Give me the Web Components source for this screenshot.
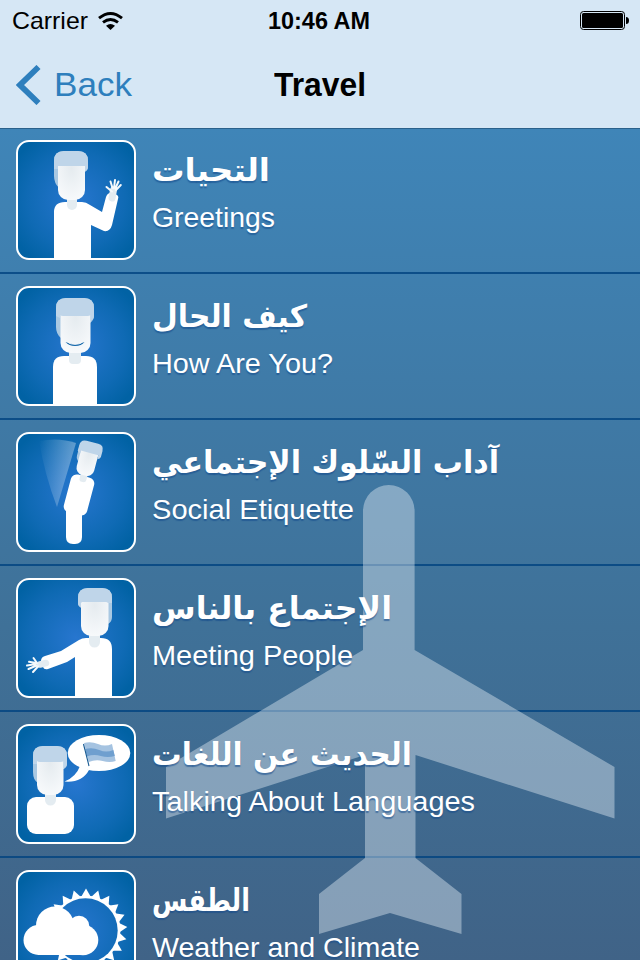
<!DOCTYPE html>
<html lang="en"><head><meta charset="utf-8"><title>Travel</title>
<style>html,body{margin:0;padding:0;width:640px;height:960px;overflow:hidden}</style></head>
<body><travel-app></travel-app>
<script>
class FitText extends HTMLElement{
  connectedCallback(){
    const r=this.attachShadow({mode:'open'});
    r.innerHTML='<style>:host{display:block;white-space:nowrap}span{display:inline-block;transform-origin:0 50%}</style><span><slot></slot></span>';
    const s=r.querySelector('span'),w=+this.getAttribute('width');
    if(w&&s.offsetWidth)s.style.transform='scaleX('+w/s.getBoundingClientRect().width+')';
    if(w)this.style.width=w+'px';
  }
}
customElements.define('fit-text',FitText);

const teeth=()=>{let s='';for(let i=0;i<21;i++){s+=`<path d="M64.800 27.500L70 18.600l5.200 8.900z" transform="rotate(${i*17.14} 70 60)"/>`}return s};
const ART={
greet:`<path fill="#a9c8e2" d="M38 21q0-10 10-10h14q10 0 10 10v6q0 3-3 5H43v16q-5-5-5-12z"/>
<path fill="#fff" d="M38 120V72q0-10 11-10h17q4 0 8 3l12 7 4-15q2-5 7-4l4 2q2 1 1 4l-6 26q-2 7-8 6l-13-6v35z"/><path fill="#e4ecf1" d="M51 58h10v7a5 5 0 0 1-10 0z"/>
<rect x="42" y="15" width="27" height="45" rx="10" fill="url(#face)"/><path fill="#bfd5e9" d="M38 29v-8q0-10 10-10h14q10 0 10 10v6q0 3-3 4v-5H42v3z"/>
<path d="M96 58l1.500-8" stroke="#e4ecf1" stroke-width="7" stroke-linecap="round"/><g stroke="#f5f9fb" stroke-width="2" stroke-linecap="round"><path d="M96 51.500l-5.500-4.500M96.500 48l-2-6.500M98 48l1-8M99.500 48l3-6.500M100 50l4.800-5"/></g>`,
how:`<path fill="#a9c8e2" d="M40 22q0-10 10-10h18q10 0 10 10v8q0 4-4 7H45v15q-5-4-5-11z"/>
<path fill="#fff" d="M37 120V81q0-11 11-11h22q11 0 11 11v39z"/><path fill="#e4ecf1" d="M53 65h12v9q0 4-4 4h-4q-4 0-4-4z"/>
<rect x="44.500" y="16" width="30" height="51" rx="10" fill="url(#face)"/><path fill="#bfd5e9" d="M40 30v-8q0-10 10-10h18q10 0 10 10v8q0 3-3.500 5v-6q-1 1-3 1H47q-2 0-3-1v3z"/><path fill="#1266a9" d="M49.500 56q10 4.500 19 0-3 4-9.500 4-6 0-9.500-4z"/><path fill="#fff" d="M52 56.500q7 3 14 0-2 2.200-7 2.200t-7-2.200z"/>`,
social:`<path fill="url(#beam)" d="M23 9q20-4 37 2L41 75Q29 44 23 9z"/><path fill="#fff" d="M50 70h16v35q0 7-7 7h-2q-7 0-7-7z"/>
<rect x="51" y="43.500" width="24" height="39" rx="6" fill="#fff" transform="rotate(15 63 63)"/><rect x="64" y="40" width="7" height="10" rx="3" fill="#e4ecf1" transform="rotate(15 67 45)"/>
<g transform="rotate(15 73 27)"><rect x="60.500" y="11" width="16" height="22" rx="6" fill="#a9c8e2"/><rect x="63" y="13" width="18" height="31" rx="7" fill="url(#face)"/><path fill="#bfd5e9" d="M60 22v-6q0-6 6-6h12q6 0 6 6v6q0 2-3 3v-4H63v3z"/></g>`,
meet:`<path fill="#fff" d="M59 120V79l-8 5-19 7q-4 1-5-2l-2-6q0-4 4-5l16-5 18-11q3-2 7-2h15q11 0 11 11v49z"/><path fill="#e4ecf1" d="M73 55h11v9a5.300 5.300 0 0 1-11 0z"/>
<path fill="#a9c8e2" d="M62 20q0-10 10-10h14q10 0 10 10v19q0 5-4 7V30H65q-3-2-3-4z"/><rect x="65" y="14" width="27.500" height="44" rx="10" fill="url(#face)"/><path fill="#bfd5e9" d="M62 20q0-10 10-10h14q10 0 10 10v5h-4q-1-1-2-1H66l-1 1v4q-3-1-3-4z"/>
<path d="M24 86.500l6-1.500" stroke="#e4ecf1" stroke-width="6.500" stroke-linecap="round"/><g stroke="#f5f9fb" stroke-width="2" stroke-linecap="round"><path d="M21 85l-3.500-5M20 85l-7-1.200M20 86l-9 1.500M20.500 87.500l-8 3.500M22 88.500l-5 5.500"/></g>`,
lang:`<path fill="#a9c8e2" d="M17 32q0-10 10-10h14q10 0 10 10v8q0 3-3 5H22v14q-5-3-5-11z"/><rect x="11" y="73" width="47" height="37" rx="9" fill="#fff"/>
<path fill="#e4ecf1" d="M29 68h11v8a5.300 5.300 0 0 1-11 0z"/><rect x="21" y="26" width="26.500" height="45" rx="10" fill="url(#face)"/><path fill="#bfd5e9" d="M17 40v-8q0-10 10-10h14q10 0 10 10v8q0 3-3.500 4v-7q-1 1-3 1H24q-2 0-3-1v3z"/>
<ellipse cx="83" cy="29" rx="31.300" ry="18" fill="#fff"/><path fill="#fff" d="M64 42q-4 11-15.500 15.500Q66 59 73 46z"/>
<path fill="#a5c3e1" d="M68 19q7-2 14 1t14 0l3.700 17q-6 2-13 0t-14 1z"/><path fill="#6f9fcf" d="M69.300 25q7-2 14 1t14 0l1.500 6q-7 2-14 0t-14 .5z"/><path d="M67.500 20l5.500 22" stroke="#165992" stroke-width="1.100"/>`,
weather:`<g fill="#fff">${teeth()}</g><circle cx="70" cy="60" r="34.500" fill="#fff"/><circle cx="69.500" cy="60.500" r="32.200" fill="url(#sky)"/><g fill="#fff"><circle cx="39" cy="55.500" r="19"/><circle cx="63" cy="56" r="10.300"/><circle cx="22.500" cy="70" r="15"/><circle cx="67" cy="70" r="15.300"/><path d="M22 55h45v30H22z"/></g>`};

class TopicIcon extends HTMLElement{connectedCallback(){
  this.attachShadow({mode:'open'}).innerHTML=`<style>:host{display:block;box-sizing:border-box;width:120px;height:120px;border:2px solid #fff;border-radius:13px;overflow:hidden;background:radial-gradient(circle,#2776cf 0,#0f6ab4 60%,#0162a4 88%)}svg{display:block;margin:-2px}</style>
<svg width="120" height="120" viewBox="0 0 120 120" fill="none"><defs><radialGradient id="sky" gradientUnits="userSpaceOnUse" cx="60" cy="60" r="82"><stop stop-color="#2776cf"/><stop offset=".6" stop-color="#0f6ab4"/><stop offset=".88" stop-color="#0162a4"/></radialGradient><radialGradient id="face" cx=".5" cy=".3" r=".75"><stop stop-color="#e5ebef"/><stop offset="1" stop-color="#f8fafc"/></radialGradient><linearGradient id="beam" x1="0" x2="1" y2=".2"><stop stop-color="#fff" stop-opacity="0"/><stop offset="1" stop-color="#fff" stop-opacity=".35"/></linearGradient></defs>${ART[this.getAttribute('name')]}</svg>`;
}}
customElements.define('topic-icon',TopicIcon);

class TopicRow extends HTMLElement{connectedCallback(){const a=n=>this.getAttribute(n);
  this.attachShadow({mode:'open'}).innerHTML=`<style>:host{display:flex;box-sizing:border-box;height:146px;flex:none;padding:12px 16px 0;gap:16px;color:#fff}
.t{display:flex;flex-direction:column;text-shadow:0 2px 1px rgba(20,75,140,.55)}.ar{font:bold 31px/40px "DejaVu Sans",sans-serif;height:40px;margin-top:10px}.en{font:28px/32px "Liberation Sans",Arial,sans-serif;margin-top:12px}</style>
<topic-icon name="${a('icon')}"></topic-icon><div class="t"><fit-text class="ar" lang="ar" dir="ltr" width="${a('aw')}">${a('ar')}</fit-text><fit-text class="en" width="${a('ew')}">${a('en')}</fit-text></div>`;
}}
customElements.define('topic-row',TopicRow);

class NavHeader extends HTMLElement{connectedCallback(){
  this.attachShadow({mode:'open'}).innerHTML=`<style>:host{display:block;height:128px;flex:none;background:#d6e7f5;border-bottom:1px solid #2a618b;margin-bottom:-1px;position:relative;z-index:1;font-family:"Liberation Sans",Arial,sans-serif;color:#000}
.s,.n{display:grid;grid-template-columns:1fr auto 1fr;align-items:center}.s{height:41px;padding:0 11px 0 12px;font-size:24px}.n{height:87px;padding:0 16px;font-size:34px}.l{display:flex;align-items:center;gap:10px}.n .l{gap:13px;color:#2e7fbd}.r{justify-self:end}b{display:block}.s b{margin:0 3px 0 0}svg{display:block}</style>
<div class="s"><div class="l"><fit-text width="76">Carrier</fit-text><svg width="25" height="20" viewBox="0 0 25 20" fill="none" stroke="#000" stroke-width="2.900"><path d="M1 7.200q11.500-9.500 23 0M5 11.400q7.500-6 15 0"/><path d="M8 14.800q4.500-3.400 9 0L12.500 19z" fill="#000" stroke="none"/></svg></div><b><fit-text width="102">10:46 AM</fit-text></b>
<svg class="r" width="49" height="19" viewBox="0 0 49 19"><rect x=".5" y=".5" width="44" height="18" rx="3" fill="none" stroke="#000"/><rect x="2" y="2" width="41" height="15" rx="1.500"/><path d="M46 6q3 0 3 3.500T46 13z"/></svg></div>
<div class="n"><div class="l"><svg width="25" height="40" viewBox="0 0 25 40" fill="none" stroke="#2e7fbd" stroke-width="5.800"><path d="M22.500 2L4 20l18.500 18"/></svg><fit-text width="78">Back</fit-text></div><b><fit-text width="92">Travel</fit-text></b></div>`;
}}
customElements.define('nav-header',NavHeader);

class TravelApp extends HTMLElement{connectedCallback(){
  const rows=[['greet','التحيات',118,'Greetings',123],['how','كيف الحال',155,'How Are You?',181],['social','آداب السّلوك الإجتماعي',347,'Social Etiquette',202],['meet','الإجتماع بالناس',240,'Meeting People',201],['lang','الحديث عن اللغات',260,'Talking About Languages',323],['weather','الطقس',98,'Weather and Climate',268]];
  this.attachShadow({mode:'open'}).innerHTML=`<style>:host{display:flex;flex-direction:column;width:640px;height:960px;overflow:hidden;position:relative}
main{flex:1;min-height:0;display:flex;flex-direction:column;overflow:hidden;position:relative;background:repeating-linear-gradient(transparent 0 144px,#004380d0 144px 146px),linear-gradient(#3f85b8,#3f7198 60%,#406387)}
.plane{position:absolute;left:0;top:0}topic-row{position:relative}</style>
<nav-header></nav-header><main><svg class="plane" width="640" height="832" viewBox="0 128 640 832"><path fill="#dce6ef" fill-opacity=".45" d="M363 511a25.800 26 0 0 1 51.600 0V650L614.500 767V818.500L415.500 755V858L461.500 894V934L390 913 319 934V894L365 858V755L166 818.500V767L363 650z"/></svg>
${rows.map(r=>`<topic-row icon="${r[0]}" ar="${r[1]}" aw="${r[2]}" en="${r[3]}" ew="${r[4]}"></topic-row>`).join('')}</main>`;
}}
customElements.define('travel-app',TravelApp);
</script></body></html>
